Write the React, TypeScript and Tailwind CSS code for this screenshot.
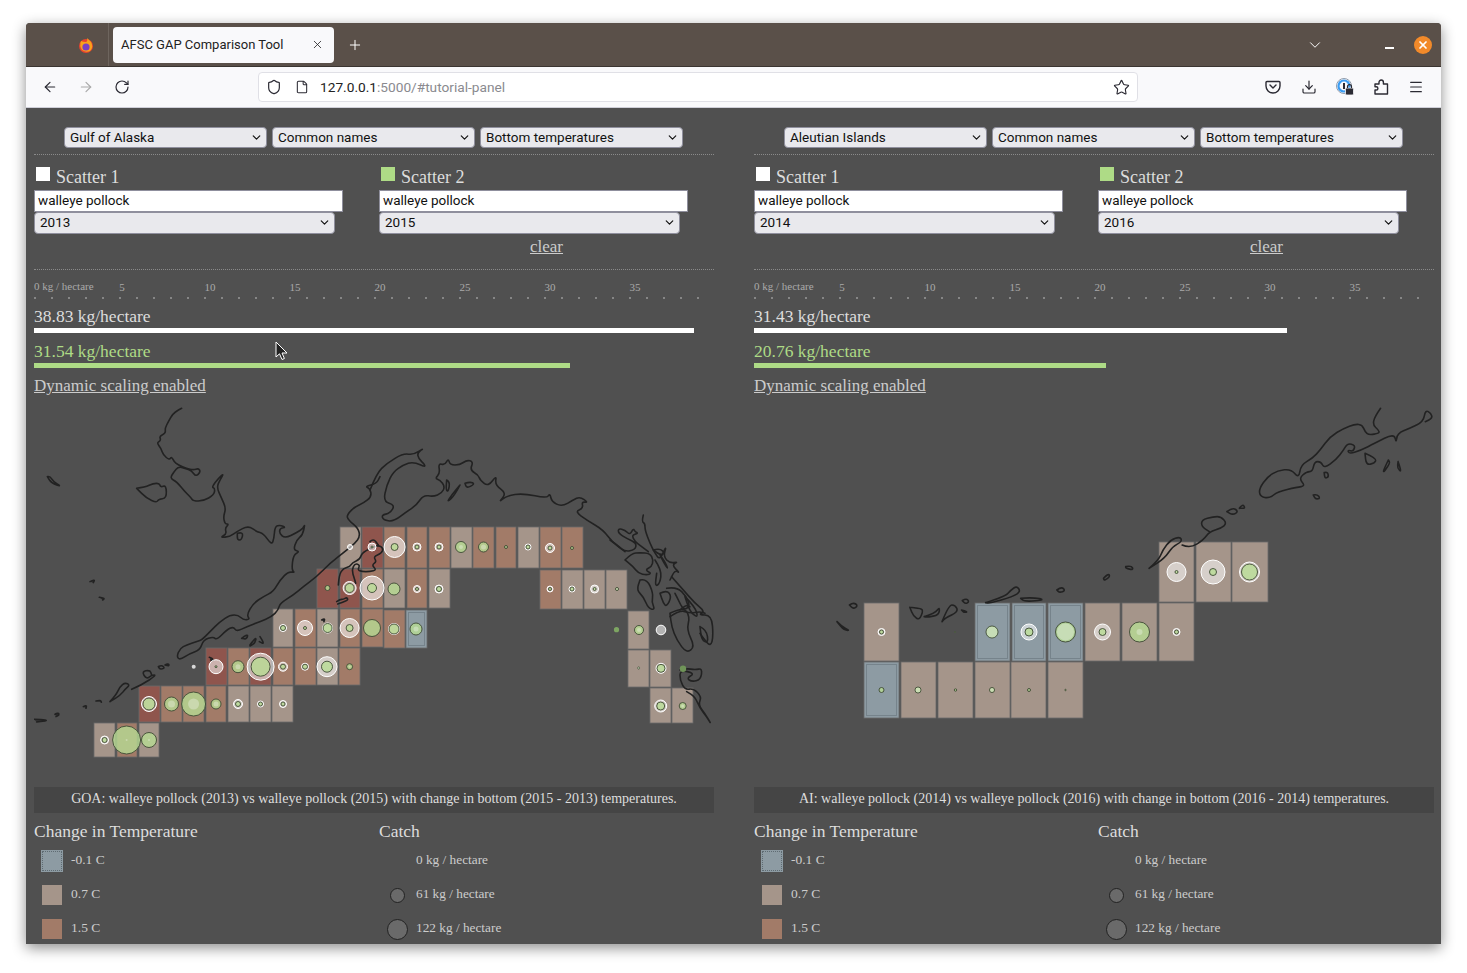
import { ArrowLeft, ArrowRight, ChevronDown, Download, File, Menu, Plus, RotateCw, Shield, Star, X } from 'lucide-react'

const serif = 'font-["Liberation_Serif",serif]'

// [x, y, w, h, colour]
type Cell = [number, number, number, number, string]
// [cx, cy, white radius, green radius]
type Dot = [number, number, number, number]

const RED = '#8f554d'
const BRN = '#a27b68'
const GRY = '#a5958a'
const BLU = '#8d9ba3'

const goaCells: Cell[] = [
  [340, 527, 21, 41, GRY], [362, 527, 21, 41, RED], [384, 527, 21, 41, BRN], [407, 527, 20, 41, BRN], [429, 527, 21, 41, BRN],
  [451, 527, 21, 41, GRY], [473, 527, 21, 41, BRN], [496, 527, 20, 41, BRN], [518, 527, 21, 41, GRY], [540, 527, 21, 41, BRN], [562, 527, 21, 41, BRN],
  [317, 569, 21, 39, RED], [340, 569, 20, 39, RED], [362, 569, 21, 39, BRN], [384, 569, 21, 39, GRY], [407, 569, 20, 39, BRN], [429, 569, 21, 39, GRY],
  [540, 570, 21, 39, BRN], [562, 570, 21, 39, GRY], [584, 570, 21, 39, GRY], [606, 570, 21, 39, GRY],
  [273, 609, 20, 38, GRY], [295, 609, 21, 38, BRN], [317, 609, 21, 38, GRY], [340, 609, 20, 38, BRN], [362, 609, 21, 38, BRN], [384, 610, 21, 38, BRN], [406, 610, 21, 38, BLU],
  [628, 611, 21, 38, GRY],
  [206, 648, 21, 37, RED], [228, 648, 21, 37, BRN], [250, 648, 21, 37, RED], [273, 648, 20, 37, BRN], [295, 648, 21, 37, BRN], [317, 648, 21, 37, GRY], [339, 648, 21, 37, BRN],
  [628, 650, 21, 37, GRY], [650, 650, 21, 37, GRY],
  [139, 686, 21, 36, RED], [161, 686, 21, 36, BRN], [183, 686, 21, 36, BRN], [206, 686, 20, 36, BRN], [228, 686, 21, 36, GRY], [250, 686, 21, 36, GRY], [272, 686, 21, 36, GRY],
  [650, 688, 21, 35, GRY], [672, 688, 21, 35, GRY],
  [94, 723, 21, 34, GRY], [117, 723, 20, 34, BRN], [139, 723, 20, 34, GRY],
]

const goaDots: Dot[] = [
  [350, 547, 2.5, 0], [372, 547, 4, 1], [394.6, 547, 10.5, 3.5], [417, 547, 4, 2], [439, 547, 4, 2], [461, 547, 2, 5.5], [483.5, 547, 2.5, 5], [506, 547, 0, 1.5], [528, 547, 3, 2], [550, 548, 4.5, 2], [572, 548, 0, 1.5],
  [327.5, 588, 0, 2.5], [349.6, 588, 6.5, 4.5], [372, 588, 12, 4.5], [394, 589, 0, 6], [417, 589, 3.5, 1.5], [439, 589, 4, 2.5], [550, 589, 3, 1.5], [572, 589, 3, 2], [594.6, 589, 4, 1.5], [617, 589, 1, 1.5],
  [283, 628, 3.5, 2.5], [305, 628, 7.5, 1.5], [327.6, 628, 5, 4.5], [349.6, 628, 9.5, 3.5], [372, 628, 0, 8.5], [394, 629, 5.5, 5], [416, 629, 2.5, 6], [639, 630, 2, 4.5],
  [216, 666.7, 7, 1], [238, 666.7, 2.5, 6], [260.6, 666.7, 13.5, 9.5], [283, 666.7, 4.5, 2.5], [305, 666.7, 3.5, 2.5], [327, 666.7, 10, 5.5], [349.6, 666.7, 1, 3], [638.7, 668, 1, 1], [661, 668.3, 5, 4],
  [149, 704, 7.5, 6], [171.5, 704, 3.5, 7], [193.6, 704, 5.5, 12], [216, 704, 2.5, 5], [238, 704, 4.5, 2.5], [260.5, 704, 3, 2], [283, 704, 3.5, 2], [660.7, 706, 6, 4], [682.7, 706, 1.5, 3.5],
  [104.6, 740, 4, 2.5], [126.6, 740, 1, 14], [149, 740, 1, 7.5],
]

const aiCells: Cell[] = [
  [1159, 542, 35, 60, GRY], [1196, 542, 35, 60, GRY], [1232, 542, 36, 60, GRY],
  [864, 603, 35, 58, GRY], [975, 603, 35, 58, BLU], [1012, 603, 34, 58, BLU], [1048, 603, 35, 58, BLU], [1085, 603, 35, 58, GRY], [1122, 603, 35, 58, GRY], [1159, 603, 35, 58, GRY],
  [864, 662, 35, 56, BLU], [901, 662, 35, 56, GRY], [938, 662, 35, 56, GRY], [975, 662, 35, 56, GRY], [1011, 662, 35, 56, GRY], [1048, 662, 35, 56, GRY],
]

const aiDots: Dot[] = [
  [1176.5, 572, 9.5, 1.5], [1213, 572, 12, 3.5], [1249.5, 572, 10, 8],
  [881.5, 632, 3.5, 2], [955, 632, 0, 0.5], [992, 632, 5.5, 6], [1029, 632, 8, 4], [1065.5, 632, 8.5, 10], [1102.5, 632, 8, 3.5], [1139.5, 632, 3, 10], [1176.5, 632, 3.5, 2],
  [881.5, 690, 0, 2.5], [918, 690, 2.5, 3], [955.5, 690, 0, 1.2], [992, 690, 2, 2.5], [1029, 690, 0, 1.5], [1065.5, 690, 0, 0.7],
]

// coastlines, in the coordinates of the crop they were traced from
const goaWest = [
  '455,25 445,30 428,42 415,65 405,85 407,100 388,108 393,122 380,128 393,145 400,165 418,180 425,170 432,185 445,195 470,205 490,210 505,205 512,215 498,230 485,212 465,205 445,200 432,215 420,235 440,245 465,275 482,292 490,303 520,303 552,285 555,265 545,262 565,235 582,220 570,240 560,262 575,295 588,325 580,350 585,372 597,372 585,385 590,402 570,413 600,410 620,395 655,377 680,395 700,400 725,435 732,415 735,380 750,375 768,382 750,385 748,400 765,415 800,398 820,385 825,372 818,405 800,420 790,450 810,455 790,465 785,510 795,518 775,515 750,540 730,575 700,590 670,610 650,645 660,658 640,660 625,645 600,645 570,665 540,695 515,720 500,725 470,735 450,745 440,770 450,780 480,760 510,750 520,720 550,710 560,720 590,690 610,680 620,695 650,680 690,665 725,650 745,630 750,610 790,585 820,560 860,530 900,490 945,455 975,430 990,410 985,385 955,360 950,345 975,320 1000,310 1025,290 1020,265 1005,260 1040,250 1050,230',
  '240,905 258,885 270,860 285,848 300,855 285,868 272,885 240,905',
  '305,868 335,855 380,825 365,825 350,838 335,815 360,810 365,825',
  '635,715 655,700 650,718 635,715',
  '660,735 680,708 675,730 660,738',
  '690,710 705,733 688,725',
  '622,400 640,395 635,420 622,420 622,400',
  '320,265 345,262 370,250 388,250 392,262 408,255 410,295 385,298 380,308 350,295 320,265',
  '52,230 60,228 70,245 95,260 65,250 52,230',
  '385,800 395,795 405,805 390,808 385,800',
  '405,795 415,790 418,798 405,795',
]
const goaWestIslands = [
  '180,545 195,538 190,548',
  '208,592 225,595 218,600',
  '160,920 170,915 168,925',
  '198,903 212,900 214,907',
  '75,943 85,938 88,945 78,950',
  '12,958 35,958 55,962 20,966',
  '875,660 885,655 882,665',
  '538,772 548,775 550,782 542,780',
]
const kodiak = [
  '70,195 72,165 85,145 105,140 112,128 135,118 140,100 165,85 190,75 205,85 200,100 175,110 185,125 170,135 185,150 165,155 140,155 128,150 135,135 120,130 110,150 118,175 122,190',
  '165,65 175,55 190,75',
  '65,245 75,238 85,238 95,232 100,240 80,248 68,252',
]
const goaEast = [
  '0,180 20,130 50,100 100,70 130,75 165,52 135,75 175,115 130,95 100,105 70,125 50,165 40,215 75,225 60,250 35,255 40,270 70,275 110,245 140,225 160,195 190,200 215,190 225,170 210,150 195,145 210,130 205,100 225,105 235,85 240,105 270,105 290,90 310,95 300,120 325,135 330,150 355,170 380,135 375,165 410,190 385,218 410,197 460,190 530,205 540,190 545,215 575,230 610,210 630,200 655,218 635,215 640,235 615,245 650,270 700,300 725,335 765,365',
  '905,440 940,480 975,520 1005,545 985,555 1025,555 1030,620 1022,650 1000,625 990,610',
  '900,550 940,530 960,560 950,600 975,650 950,670 920,630 905,590 900,550',
  '945,500 975,530 985,565 960,545 945,500',
  '990,590 1010,600 1015,640 995,630 990,590',
  '930,720 950,715 975,720 997,715 992,750 965,755 950,745 975,730 930,720 930,750 945,780 970,775 995,800 985,825 1005,850 1025,885 1010,860 990,835 975,800 950,785',
  '230,150 240,155 235,185 228,180 230,150',
  '270,165 255,195 230,218 245,195 270,165',
  '285,160 300,155 315,162 290,175 285,160',
]
const panhandle = [
  '0,90 25,108 45,125 75,120 80,100 50,85 25,70 25,55 45,60 60,75 70,55 75,65 85,70 65,75 75,95 95,110 115,125',
  '45,150 65,130 90,128 120,130 130,150 125,170 105,180 125,190 110,195 85,190 70,170 45,150',
  '100,15 95,35 105,40 105,60 120,100 135,130 150,150 170,105 160,140 180,160 205,155 185,165 210,190 195,180 180,210',
  '130,120 150,115 165,130 150,135 130,120',
  '150,135 165,155 175,180 160,155 150,135',
  '135,150 155,180 150,220 135,230 140,190',
  '90,210 110,205 130,250 125,275 135,300 115,295 100,260 80,240 90,210',
  '150,250 170,240 185,260 170,290 160,280 150,250',
  '170,235 200,230 230,260 240,290 220,300 205,270 195,250',
  '180,320 210,300 240,310 270,305 285,310',
  '210,300 225,285 240,290',
]
const aiCoast = [
  '1415,25 1400,50 1395,75 1410,90 1412,100 1385,105 1375,95 1368,75 1350,72 1320,85 1285,110 1260,150 1240,175 1210,195 1205,235 1185,207 1150,212 1125,230 1103,265 1105,290 1130,295 1150,275 1200,262 1222,258 1205,235 1225,215 1240,215 1245,185 1262,185 1270,205 1300,180 1320,150 1330,130 1350,135 1345,155 1330,150 1335,162 1365,150 1400,130 1450,100 1455,130 1458,100 1490,85 1525,65 1530,30 1545,40 1548,55 1530,65',
  '1270,218 1278,215 1282,230 1272,236 1270,218',
  '1242,285 1252,283 1260,295 1248,298 1242,285',
  '1375,160 1405,175 1400,190 1378,195 1375,160',
  '1435,180 1415,228 1440,190 1435,180',
  '1460,185 1470,218 1458,205 1460,185',
  '820,505 845,480 855,450 875,420 900,410 905,425 880,440 860,475 820,505',
  '905,435 925,445 960,420 975,395 1005,385 1020,370 1005,350 985,350 955,360 955,380 975,395',
  '1020,335 1035,322 1050,335 1035,345 1020,335',
  '1052,325 1060,312 1068,325 1052,325',
  '760,500 775,497 780,510 760,505 760,500',
  '703,535 715,520 720,530 705,542 703,535',
  '583,570 595,560 605,572 590,578 583,570',
  '400,608 450,590 465,570 480,558 490,575 470,590 410,610 400,608',
  '490,595 520,592 555,600 500,605 490,595',
  '50,615 60,607 72,617 60,627 50,615',
  '18,665 30,680 52,692 35,690 18,665',
  '205,622 230,625 240,630 230,660 215,650 205,622',
  '242,650 270,640 282,620 280,645 250,652 242,650',
  '288,665 305,615 322,615 330,635 295,655 288,665',
  '340,602 350,595 358,605 348,612 340,602',
  '338,630 355,635 345,638 338,630',
]

// rounds the traced corners off, through the midpoints of each segment
function smooth(points: string) {
  const pts = points.split(' ').map(p => p.split(',').map(Number))
  let d = `M${pts[0][0]} ${pts[0][1]}`
  for (let i = 1; i < pts.length - 1; i++) {
    const mx = (pts[i][0] + pts[i + 1][0]) / 2
    const my = (pts[i][1] + pts[i + 1][1]) / 2
    d += `Q${pts[i][0]} ${pts[i][1]} ${mx} ${my}`
  }
  const last = pts[pts.length - 1]
  return `${d}L${last[0]} ${last[1]}`
}

function Coast({ lines, transform, fill = 'none' }: { lines: string[]; transform: string; fill?: string }) {
  return (
    <g transform={transform} fill={fill} stroke="#222222" strokeWidth={1.6} strokeLinejoin="round" strokeLinecap="round">
      {lines.map((points, i) => (
        <path key={i} d={smooth(points)} vectorEffect="non-scaling-stroke" />
      ))}
    </g>
  )
}

function Cells({ cells }: { cells: Cell[] }) {
  return (
    <g>
      {cells.map(([x, y, w, h, colour], i) => (
        <g key={i}>
          <rect x={x} y={y} width={w} height={h} fill={colour} stroke="#6a6a6a" strokeWidth={0.8} />
          {colour === BLU && (
            <rect x={x + 2.5} y={y + 2.5} width={w - 5} height={h - 5} fill="none" stroke="#5f6b72" strokeWidth={1} strokeDasharray="1 1" />
          )}
        </g>
      ))}
    </g>
  )
}

function Dots({ dots }: { dots: Dot[] }) {
  return (
    <g>
      {dots.map(([cx, cy, white, green], i) => {
        const whiteOuter = white > green
        const whiteCircle = white > 0 && (
          <circle key="w" cx={cx} cy={cy} r={white} fill="#ffffff" fillOpacity={whiteOuter ? 0.55 : 0.3} stroke={whiteOuter ? '#ffffff' : 'none'} strokeWidth={1} />
        )
        const greenCircle = green > 0 && <circle key="g" cx={cx} cy={cy} r={green} fill="#b8dc94" fillOpacity={0.8} stroke="#3d4a33" strokeWidth={0.9} />
        return <g key={i}>{whiteOuter ? [whiteCircle, greenCircle] : [greenCircle, whiteCircle]}</g>
      })}
    </g>
  )
}

function GoaMap() {
  return (
    <svg viewBox="34 400 680 380" className="block w-[680px] h-[380px]">
      <Cells cells={goaCells} />
      <Coast lines={goaWest} transform="translate(30 400) scale(0.3333)" />
      <Coast lines={goaWestIslands} transform="translate(30 400) scale(0.3333)" fill="#333333" />
      <Coast lines={goaEast} transform="translate(370 430) scale(0.3333)" />
      <Coast lines={kodiak} transform="translate(315 520) scale(0.3333)" />
      <Coast lines={panhandle} transform="translate(610 510) scale(0.3333)" />
      <Dots dots={goaDots} />
      <circle cx={193.7} cy={666.7} r={2} fill="#d8d8d8" />
      <circle cx={616.5} cy={629.7} r={2.6} fill="#7da562" />
      <circle cx={683} cy={668.7} r={3.2} fill="#6f9458" />
      <circle cx={661} cy={630} r={4.8} fill="#b4b4b4" stroke="#ffffff" />
    </svg>
  )
}

function AiMap() {
  return (
    <svg viewBox="754 400 680 380" className="block w-[680px] h-[380px]">
      <Cells cells={aiCells} />
      <Coast lines={aiCoast} transform="translate(830 400) scale(0.3891 0.3333)" />
      <Dots dots={aiDots} />
    </svg>
  )
}

function Ruler({ labels }: { labels: number[] }) {
  const ticks = Array.from({ length: 40 }, (_, i) => i * 17 + 0.5)
  return (
    <svg viewBox="0 0 680 22" className={`block w-[680px] h-[22px] ${serif}`}>
      <text x={0} y={12} fontSize={11} fill="#aaaaaa">0 kg / hectare</text>
      {labels.map((x, i) => (
        <text key={x} x={x} y={13} fontSize={11} fill="#aaaaaa" textAnchor="middle">{(i + 1) * 5}</text>
      ))}
      {ticks.map(x => (
        <rect key={x} x={x} y={19} width={1} height={2} fill="#bbbbbb" />
      ))}
    </svg>
  )
}

function Select({ label, className }: { label: string; className: string }) {
  return (
    <div className={`flex items-center justify-between rounded-[4px] border border-[#8f8f9d] bg-[#e9e9ed] pl-[5px] pr-[3px] text-[13.5px] text-[#111111] font-["Roboto",sans-serif] ${className}`}>
      <span>{label}</span>
      <ChevronDown className="w-[13px] h-[13px]" strokeWidth={2.2} />
    </div>
  )
}

function Scatter({ colour, label, species, year }: { colour: string; label: string; species: string; year: string }) {
  return (
    <div>
      <div className={`flex items-start h-[25px] pl-[2px] text-[18px] text-[#dddddd] ${serif}`}>
        <div className={`w-[14px] h-[14px] mt-[2px] mr-[6px] ${colour}`} />
        <span className="leading-[24px]">{label}</span>
      </div>
      <div className='w-[309px] h-[22px] border border-[#8f8f9d] bg-white pl-[3px] text-[13.5px] leading-[18px] text-[#111111] font-["Roboto",sans-serif]'>{species}</div>
      <Select label={year} className="w-[301px] h-[22px] pb-[1px]" />
    </div>
  )
}

function Legend({ cols }: { cols: string }) {
  return (
    <div className={`grid ${cols} mt-[7px] ${serif}`}>
      <div>
        <div className="text-[17.5px] leading-[22px] text-[#dddddd]">Change in Temperature</div>
        <div className="flex flex-col gap-[14px] mt-[9px] pl-[8px] text-[13.5px] text-[#cccccc]">
          <div className="flex gap-[9px]">
            <div className="w-[20px] h-[20px] border border-dotted border-[#5f6b72] bg-[#8d9ba3] outline outline-1 outline-[#8d9ba3]" />
            <span className="leading-[18px]">-0.1 C</span>
          </div>
          <div className="flex gap-[9px]">
            <div className="w-[20px] h-[20px] bg-[#a5958a]" />
            <span className="leading-[18px]">0.7 C</span>
          </div>
          <div className="flex gap-[9px]">
            <div className="w-[20px] h-[20px] bg-[#a27b68]" />
            <span className="leading-[18px]">1.5 C</span>
          </div>
        </div>
      </div>
      <div>
        <div className="text-[17.5px] leading-[22px] text-[#dddddd]">Catch</div>
        <div className="flex flex-col gap-[14px] mt-[9px] text-[13.3px] text-[#cccccc]">
          <div className="flex items-start h-[20px]">
            <div className="w-[37px]" />
            <span className="leading-[18px]">0 kg / hectare</span>
          </div>
          <div className="flex items-start h-[20px]">
            <div className="w-[37px] flex justify-center pt-[3px]">
              <div className="w-[15px] h-[15px] rounded-full bg-[#6a6a6a] border border-[#222222]" />
            </div>
            <span className="leading-[18px]">61 kg / hectare</span>
          </div>
          <div className="flex items-start h-[20px]">
            <div className="w-[37px] flex justify-center">
              <div className="w-[21px] h-[21px] rounded-full bg-[#6a6a6a] border border-[#222222]" />
            </div>
            <span className="leading-[18px]">122 kg / hectare</span>
          </div>
        </div>
      </div>
    </div>
  )
}

function Panel(props: {
  region: string
  year1: string
  year2: string
  value1: string
  value2: string
  bar1: string
  bar2: string
  cols: string
  labels: number[]
  map: React.ReactNode
  caption: string
}) {
  return (
    <div className="w-[680px] shrink-0">
      <div className="flex gap-[5px] pl-[30px]">
        <Select label={props.region} className="w-[203px] h-[21px]" />
        <Select label="Common names" className="w-[203px] h-[21px]" />
        <Select label="Bottom temperatures" className="w-[203px] h-[21px]" />
      </div>
      <div className="mt-[6px] border-t border-dotted border-[#8a8a8a]" />
      <div className={`grid ${props.cols} mt-[10px]`}>
        <Scatter colour="bg-white" label="Scatter 1" species="walleye pollock" year={props.year1} />
        <Scatter colour="bg-[#aedb86]" label="Scatter 2" species="walleye pollock" year={props.year2} />
      </div>
      <div className={`h-[35px] pt-[3px] pl-[496px] text-[17px] leading-[20px] text-[#cccccc] ${serif}`}>
        <span className="underline">clear</span>
      </div>
      <div className="border-t border-dotted border-[#8a8a8a]" />
      <div className="mt-[8px]">
        <Ruler labels={props.labels} />
      </div>
      <div className={`mt-[5px] text-[17.5px] leading-[22px] text-[#dddddd] ${serif}`}>{props.value1}</div>
      <div className={`mt-[1px] h-[5px] bg-white ${props.bar1}`} />
      <div className={`mt-[7px] text-[17.5px] leading-[23px] text-[#aedb86] ${serif}`}>{props.value2}</div>
      <div className={`h-[5px] bg-[#aedb86] ${props.bar2}`} />
      <div className={`mt-[7px] h-[25px] text-[17px] leading-[22px] text-[#cccccc] underline ${serif}`}>Dynamic scaling enabled</div>
      {props.map}
      <div className={`mt-[7px] h-[26px] bg-[#454545] text-center text-[14px] leading-[24px] text-[#dddddd] ${serif}`}>{props.caption}</div>
      <Legend cols={props.cols} />
    </div>
  )
}

function BrowserChrome() {
  return (
    <>
      <div className="relative flex items-center h-[44px] bg-[#5a5049] border-b border-[#3b3531] text-white">
        <div className="w-[52px] h-full" />
        <div className="w-[16px] flex justify-center mr-[14px]">
          <svg viewBox="0 0 16 16" className="w-[16px] h-[18px]">
            <circle cx="8" cy="9" r="7" fill="#e8432f" />
            <path d="M3 4 Q1 9 4 13 Q8 16 12 14 Q16 10 13 5 Q11 3 9 1 Q10 4 8 5 Q5 5 3 4Z" fill="#f9a11b" />
            <circle cx="8" cy="10" r="3.6" fill="#7a3fc4" />
          </svg>
        </div>
        <div className="w-[1px] h-full bg-[#6e655e]" />
        <div className='flex items-center justify-between w-[221px] h-[36px] ml-[4px] pl-[8px] pr-[10px] rounded-[4px] bg-[#f9f9fb] text-[13px] text-[#222222] font-["Roboto",sans-serif]'>
          <span>AFSC GAP Comparison Tool</span>
          <X className="w-[13px] h-[13px]" strokeWidth={1.5} />
        </div>
        <Plus className="w-[16px] h-[16px] ml-[13px]" strokeWidth={1.5} />
        <div className="flex-grow" />
        <ChevronDown className="w-[18px] h-[18px] mr-[61px]" strokeWidth={1.3} />
        <div className="w-[9px] h-[2px] bg-white mt-[7px] mr-[20px]" />
        <div className="flex items-center justify-center w-[18px] h-[18px] mr-[9px] rounded-full bg-[#f28a2a]">
          <X className="w-[12px] h-[12px]" strokeWidth={3.5} />
        </div>
      </div>
      <div className="flex items-center h-[41px] bg-[#f9f9fb] border-b border-[#cfcfd8] text-[#2b2a33]">
        <ArrowLeft className="w-[16px] h-[16px] ml-[16px]" strokeWidth={1.8} />
        <ArrowRight className="w-[16px] h-[16px] ml-[20px] text-[#aaaaaa]" strokeWidth={1.8} />
        <RotateCw className="w-[16px] h-[16px] ml-[20px]" strokeWidth={1.8} />
        <div className="flex items-center w-[880px] h-[30px] ml-[128px] rounded-[4px] border border-[#e0e0e6] bg-white pl-[7px] pr-[7px]">
          <Shield className="w-[16px] h-[16px]" strokeWidth={1.8} />
          <File className="w-[14px] h-[14px] ml-[13px]" strokeWidth={1.8} />
          <span className='ml-[11px] text-[13.7px] font-["Roboto",sans-serif] text-[#222222]'>127.0.0.1<span className="text-[#8a8a8f]">:5000/#tutorial-panel</span></span>
          <div className="flex-grow" />
          <Star className="w-[17px] h-[17px]" strokeWidth={1.6} />
        </div>
        <div className="w-[127px]" />
        <svg viewBox="0 0 16 16" className="w-[16px] h-[16px]" fill="none" stroke="currentColor" strokeWidth={1.4} strokeLinecap="round" strokeLinejoin="round">
          <path d="M2 2.5h12a1 1 0 0 1 1 1V7a7 7 0 0 1-14 0V3.5a1 1 0 0 1 1-1Z" />
          <path d="M5 6l3 3 3-3" />
        </svg>
        <Download className="w-[16px] h-[16px] ml-[20px]" strokeWidth={1.8} />
        <svg viewBox="0 0 18 18" className="w-[18px] h-[18px] ml-[19px]">
          <circle cx="8" cy="8" r="7.5" fill="none" stroke="#8f9bab" strokeWidth={1} />
          <circle cx="8" cy="8" r="5.5" fill="none" stroke="#3b9cf2" strokeWidth={2.2} />
          <rect x="7" y="5" width="2" height="6" fill="#2b2a33" />
          <rect x="9.5" y="10" width="8" height="7" rx="1.2" fill="#2b2a33" stroke="#f9f9fb" strokeWidth={0.8} />
          <path d="M11.5 10V8.7a2 2 0 0 1 4 0V10" fill="none" stroke="#2b2a33" strokeWidth={1.2} />
        </svg>
        <svg viewBox="0 0 16 16" className="w-[16px] h-[16px] ml-[19px]" fill="none" stroke="currentColor" strokeWidth={1.4} strokeLinejoin="round">
          <path d="M2 15v-4h1.3a1.6 1.6 0 0 0 0-3.2H2V5h4V3.2a2.2 2.2 0 0 1 4.4 0V5h4.1v10Z" />
        </svg>
        <Menu className="w-[16px] h-[16px] ml-[19px]" strokeWidth={1.8} />
      </div>
    </>
  )
}

export default function App() {
  return (
    <div className="h-[973px] bg-white pt-[23px] pl-[26px] overflow-hidden">
      <div className="relative w-[1415px] h-[921px] overflow-hidden rounded-t-[4px] bg-[#505050] shadow-[0_4px_14px_rgba(0,0,0,0.45)]">
        <BrowserChrome />
        <div className="flex gap-[40px] pl-[8px] pt-[19px]">
          <Panel
            region="Gulf of Alaska"
            year1="2013"
            year2="2015"
            value1="38.83 kg/hectare"
            value2="31.54 kg/hectare"
            bar1="w-[660px]"
            bar2="w-[536px]"
            cols="grid-cols-[345px_335px]"
            labels={[88, 176, 261, 346, 431, 516, 601]}
            map={<GoaMap />}
            caption="GOA: walleye pollock (2013) vs walleye pollock (2015) with change in bottom (2015 - 2013) temperatures."
          />
          <Panel
            region="Aleutian Islands"
            year1="2014"
            year2="2016"
            value1="31.43 kg/hectare"
            value2="20.76 kg/hectare"
            bar1="w-[533px]"
            bar2="w-[352px]"
            cols="grid-cols-[344px_336px]"
            labels={[88, 176, 261, 346, 431, 516, 601]}
            map={<AiMap />}
            caption="AI: walleye pollock (2014) vs walleye pollock (2016) with change in bottom (2016 - 2014) temperatures."
          />
        </div>
        <svg viewBox="0 0 13 20" className="absolute left-[249px] top-[318px] w-[13px] h-[20px]">
          <path d="M1 1v15l3.5-3.2L7 18.5l2.4-1-2.4-5.5h5Z" fill="#222222" stroke="#ffffff" strokeWidth={1} />
        </svg>
      </div>
    </div>
  )
}
